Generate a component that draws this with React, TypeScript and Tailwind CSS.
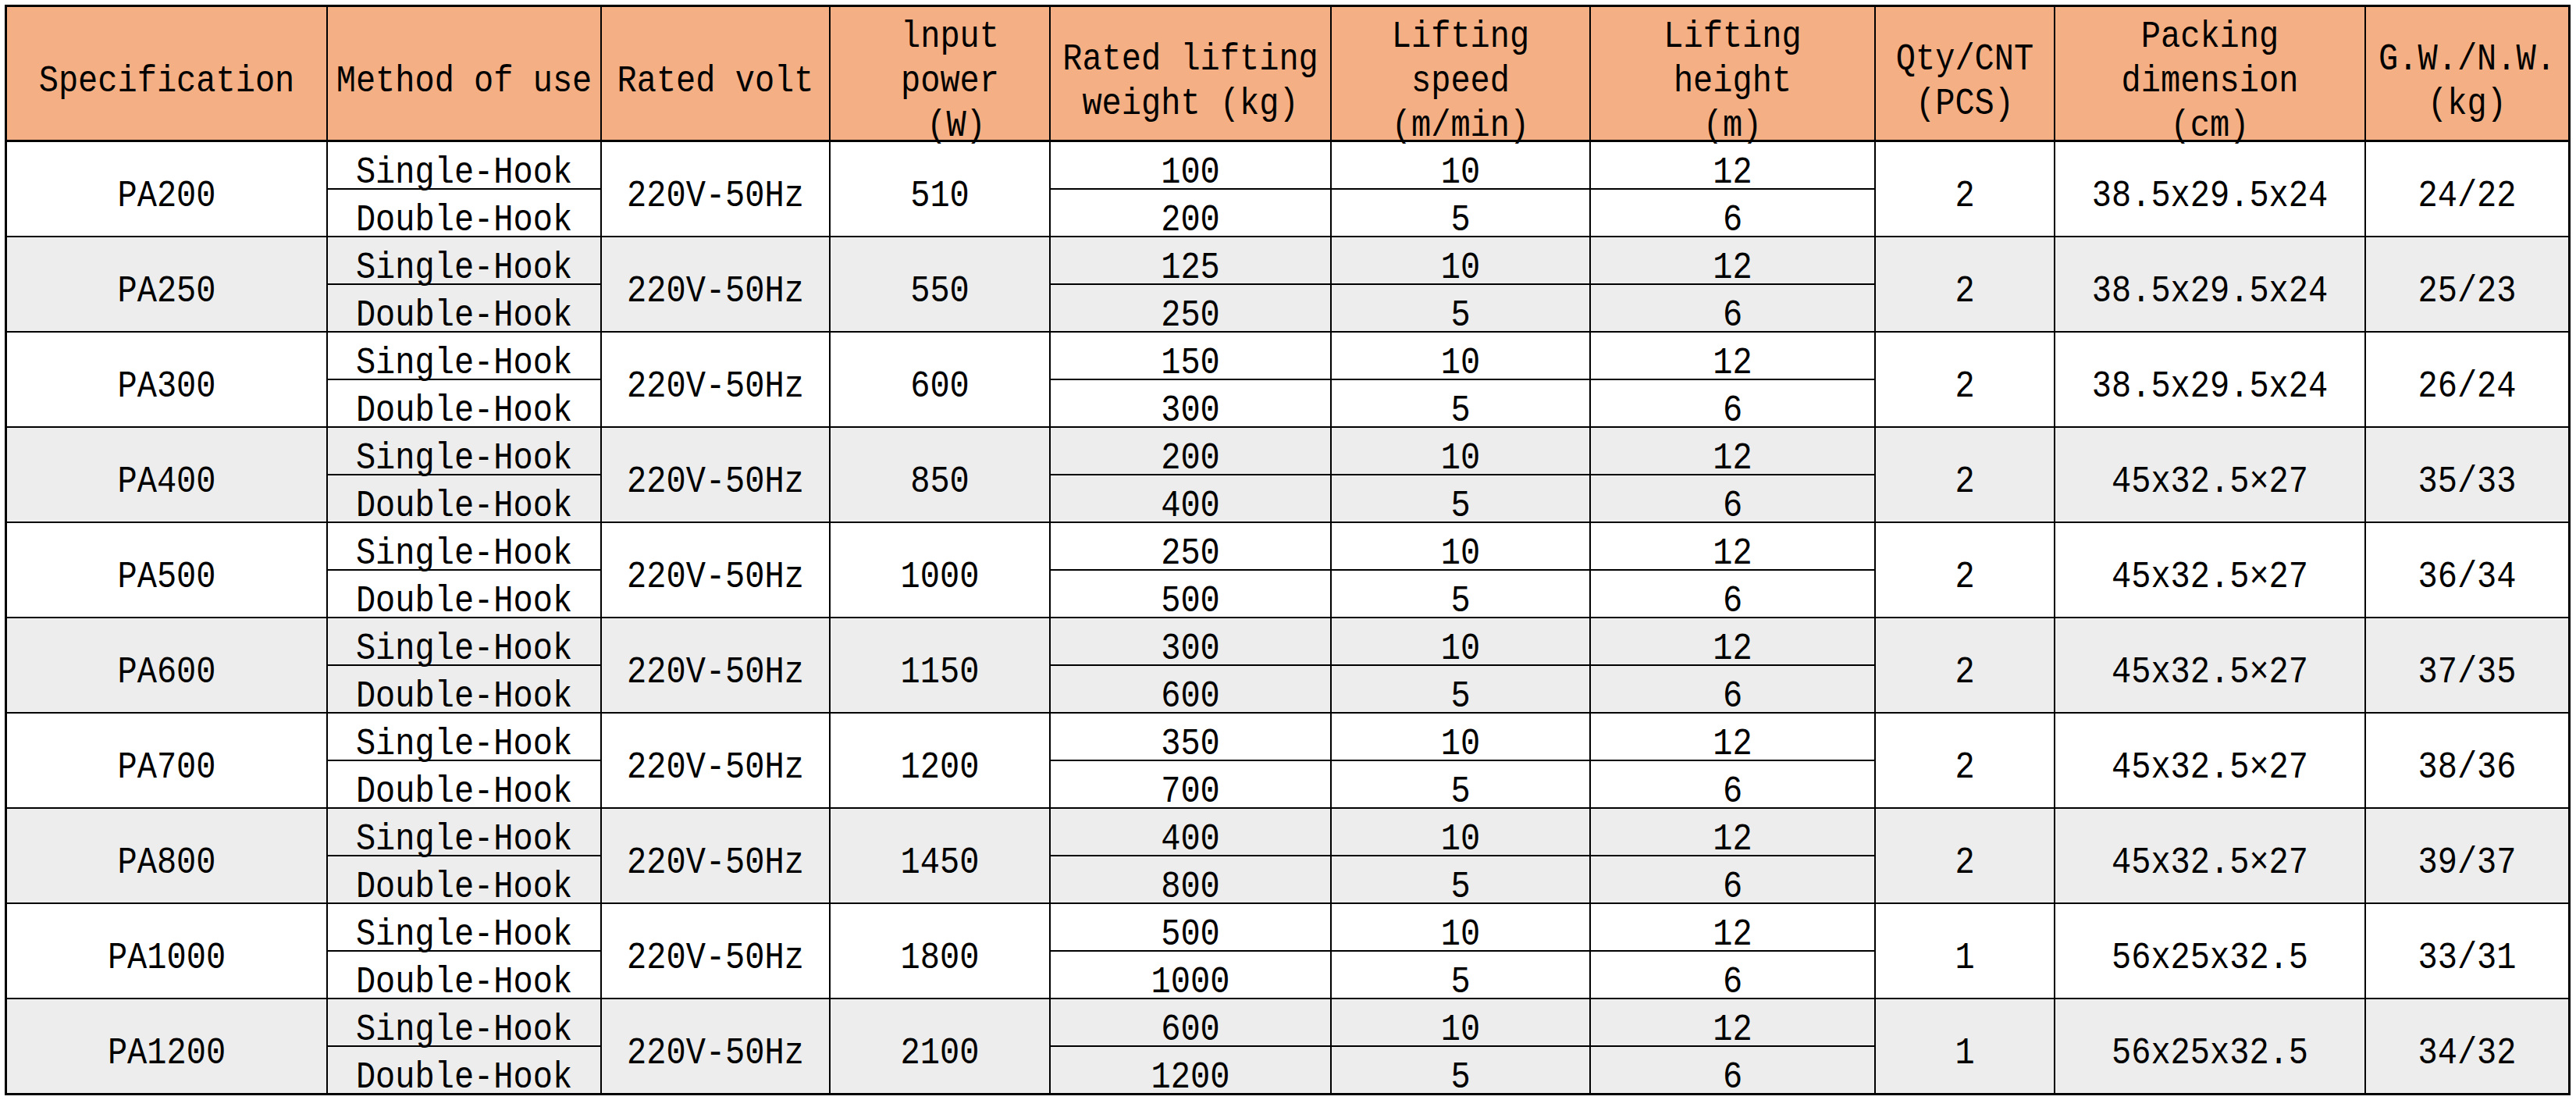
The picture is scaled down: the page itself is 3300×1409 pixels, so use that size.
import React from "react";

type Product = {
  spec: string;
  power: string;
  w1: string;
  w2: string;
  qty: string;
  pack: string;
  gw: string;
};

const products: Product[] = [
  { spec: "PA200", power: "510", w1: "100", w2: "200", qty: "2", pack: "38.5x29.5x24", gw: "24/22" },
  { spec: "PA250", power: "550", w1: "125", w2: "250", qty: "2", pack: "38.5x29.5x24", gw: "25/23" },
  { spec: "PA300", power: "600", w1: "150", w2: "300", qty: "2", pack: "38.5x29.5x24", gw: "26/24" },
  { spec: "PA400", power: "850", w1: "200", w2: "400", qty: "2", pack: "45x32.5×27", gw: "35/33" },
  { spec: "PA500", power: "1000", w1: "250", w2: "500", qty: "2", pack: "45x32.5×27", gw: "36/34" },
  { spec: "PA600", power: "1150", w1: "300", w2: "600", qty: "2", pack: "45x32.5×27", gw: "37/35" },
  { spec: "PA700", power: "1200", w1: "350", w2: "700", qty: "2", pack: "45x32.5×27", gw: "38/36" },
  { spec: "PA800", power: "1450", w1: "400", w2: "800", qty: "2", pack: "45x32.5×27", gw: "39/37" },
  { spec: "PA1000", power: "1800", w1: "500", w2: "1000", qty: "1", pack: "56x25x32.5", gw: "33/31" },
  { spec: "PA1200", power: "2100", w1: "600", w2: "1200", qty: "1", pack: "56x25x32.5", gw: "34/32" },
];

type HeaderDef = { lines: string[]; cls?: string; lineCls?: string[] };

const headers: HeaderDef[] = [
  { lines: ["Specification"] },
  { lines: ["Method of use"] },
  { lines: ["Rated volt"] },
  { lines: ["lnput", "power", "(W)"], cls: "pl-[26px]", lineCls: ["", "", "pl-4"] },
  { lines: ["Rated lifting", "weight (kg)"] },
  { lines: ["Lifting", "speed", "(m/min)"] },
  { lines: ["Lifting", "height", "(m)"] },
  { lines: ["Qty/CNT", "(PCS)"] },
  { lines: ["Packing", "dimension", "(cm)"] },
  { lines: ["G.W./N.W.", "(kg)"] },
];

function Txt({ children }: { children: React.ReactNode }) {
  return (
    <span className="inline-block whitespace-nowrap leading-none scale-y-[1.15] translate-y-[9px]">
      {children}
    </span>
  );
}

function BodyCell({ text, bg, span }: { text: string; bg: string; span?: boolean }) {
  return (
    <div
      className={`${bg} ${span ? "row-span-2" : ""} flex min-w-0 items-center justify-center overflow-visible`}
    >
      <Txt>{text}</Txt>
    </div>
  );
}

export default function App() {
  return (
    <div className="min-h-screen bg-white pt-[6px] pl-[6px] font-['Liberation_Mono','DejaVu_Sans_Mono',monospace] text-[42px] text-black">
      <div className="grid w-fit grid-cols-[409px_349px_291px_280px_358px_330px_363px_228px_396px_259px] grid-rows-[171px_repeat(20,59px)] gap-[2px] border-[3px] border-black bg-black">
        {headers.map((h, i) => (
          <div
            key={`h${i}`}
            className={`flex min-w-0 flex-col items-center justify-center border-b border-black bg-[#f4b084] ${h.cls ?? ""}`}
          >
            {h.lines.map((l, j) => (
              <div
                key={j}
                className={`flex h-[57px] items-center justify-center ${h.lineCls ? h.lineCls[j] : ""}`}
              >
                <span className="inline-block whitespace-nowrap leading-none scale-y-[1.15] translate-y-[10px]">
                  {l}
                </span>
              </div>
            ))}
          </div>
        ))}
        {products.map((p, i) => {
          const bg = i % 2 === 0 ? "bg-white" : "bg-[#ededed]";
          return (
            <React.Fragment key={p.spec}>
              <BodyCell text={p.spec} bg={bg} span />
              <BodyCell text="Single-Hook" bg={bg} />
              <BodyCell text="220V-50Hz" bg={bg} span />
              <BodyCell text={p.power} bg={bg} span />
              <BodyCell text={p.w1} bg={bg} />
              <BodyCell text="10" bg={bg} />
              <BodyCell text="12" bg={bg} />
              <BodyCell text={p.qty} bg={bg} span />
              <BodyCell text={p.pack} bg={bg} span />
              <BodyCell text={p.gw} bg={bg} span />
              <BodyCell text="Double-Hook" bg={bg} />
              <BodyCell text={p.w2} bg={bg} />
              <BodyCell text="5" bg={bg} />
              <BodyCell text="6" bg={bg} />
            </React.Fragment>
          );
        })}
      </div>
    </div>
  );
}
